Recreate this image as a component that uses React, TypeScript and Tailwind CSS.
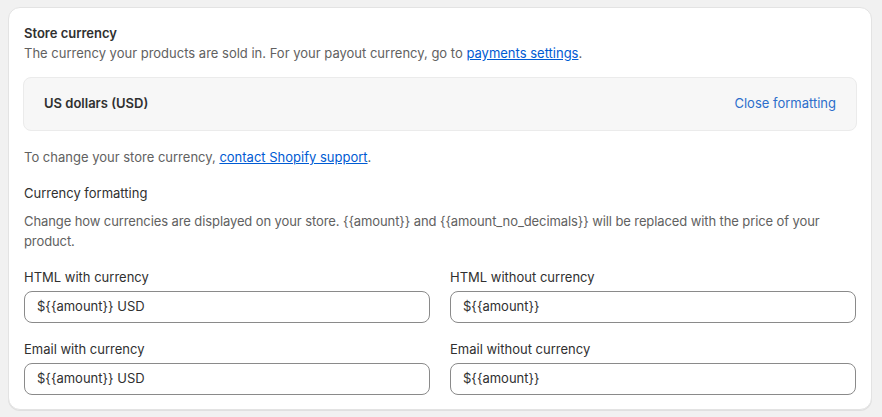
import React from 'react'

const font = { fontFamily: 'Inter, "Noto Sans", sans-serif' }

function Field({ label, value }: { label: string; value: string }) {
  return (
    <div className="flex flex-col gap-1">
      <label className="text-[13px] leading-5 text-[#303030]">{label}</label>
      <div className="flex h-8 items-center rounded-lg border border-[#8a8a8a] bg-white px-3 text-[13px] text-[#303030]">
        {value}
      </div>
    </div>
  )
}

export default function App() {
  const description =
    'Change how currencies are displayed on your store. {{amount}} and {{amount_no_decimals}} will be replaced with the price of your product.'

  return (
    <div className="min-h-[417px] bg-[#f1f1f1] px-2 pt-[7px] pb-2" style={font}>
      <div className="w-[864px] rounded-xl border border-[#e3e3e3] bg-white px-[15px] pt-[15px] pb-[14px] shadow-[0_1px_0_rgba(0,0,0,0.07)]">
        <h2 className="text-[13px] font-semibold leading-5 text-[#303030]">Store currency</h2>
        <p className="text-[13px] leading-5 text-[#616161]">
          The currency your products are sold in. For your payout currency, go to{' '}
          <a className="text-[#005bd3] underline">payments settings</a>.
        </p>

        <div className="-mx-px mt-[14px] flex h-[54px] items-center justify-between rounded-lg border border-[#ebebeb] bg-[#f7f7f7] px-5">
          <span className="text-[13px] font-semibold text-[#303030]">US dollars (USD)</span>
          <a className="text-[13px] text-[#2c6ecb]">Close formatting</a>
        </div>

        <p className="mt-4 text-[13px] leading-5 text-[#616161]">
          To change your store currency,{' '}
          <a className="text-[#005bd3] underline">contact Shopify support</a>.
        </p>

        <h3 className="mt-4 text-[13px] leading-5 text-[#303030]">Currency formatting</h3>
        <p className="mt-2 pr-8 text-[13px] leading-5 tracking-[-0.1px] text-[#616161]">{description}</p>

        <div className="mt-4 grid grid-cols-2 gap-x-5 gap-y-4">
          <Field label="HTML with currency" value="${{amount}} USD" />
          <Field label="HTML without currency" value="${{amount}}" />
          <Field label="Email with currency" value="${{amount}} USD" />
          <Field label="Email without currency" value="${{amount}}" />
        </div>
      </div>
    </div>
  )
}
